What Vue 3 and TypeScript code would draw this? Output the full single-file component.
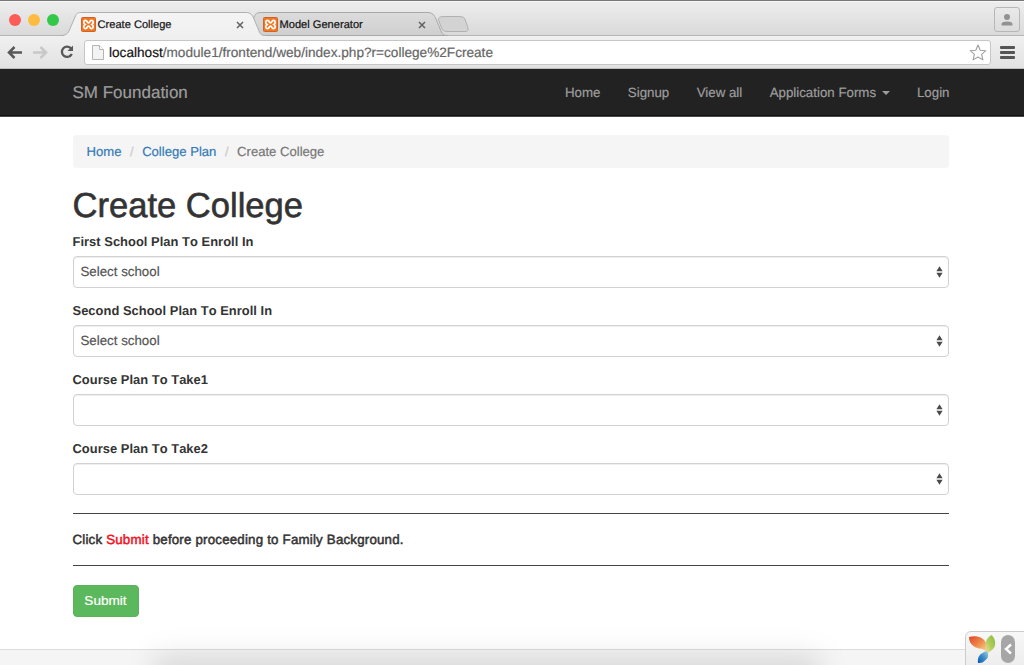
<script setup lang="ts">
interface Field { label: string; value: string }
const tabs = [
  { title: 'Create College', active: true },
  { title: 'Model Generator', active: false },
]
const links = ['Home', 'Signup', 'View all', 'Application Forms', 'Login']
const fields: Field[] = [
  { label: 'First School Plan To Enroll In', value: 'Select school' },
  { label: 'Second School Plan To Enroll In', value: 'Select school' },
  { label: 'Course Plan To Take1', value: '' },
  { label: 'Course Plan To Take2', value: '' },
]
</script>

<template>
  <div class="window">
    <header class="chrome">
      <div class="strip">
        <svg class="shapes" width="1024" height="35" viewBox="0 0 1024 35">
          <defs>
            <linearGradient id="active" x1="0" y1="0" x2="0" y2="1"><stop offset="0" stop-color="#f4f4f4" /><stop offset="1" stop-color="#efefef" /></linearGradient>
            <linearGradient id="idle" x1="0" y1="0" x2="0" y2="1"><stop offset="0" stop-color="#dcdcdc" /><stop offset="1" stop-color="#cfcfcf" /></linearGradient>
          </defs>
          <path d="M0 33.5H1024" stroke="#b5b5b5" />
          <path d="M248 33.5C258 33 258 27 253.5 17C255 11 257 10.500 263 10.500H427C433 10.500 434 13 436 17L441 29C442 32 443 33.500 448 33.500Z" fill="url(#idle)" stroke="#a9a9a9" />
          <path d="M444 14.5H460Q464 14.5 465 17L468 26Q469 29.500 465 29.500H447Q443 29.500 442 27L438.500 18Q437.500 14.500 444 14.500Z" fill="#d3d3d3" stroke="#b1b1b1" />
          <path d="M62 34C67 33 68 31 69 29L75 15C76.500 11 78 10.500 82 10.500H246C251 10.500 252 13 254 17L259 29C260 32 261 33 266 34V35H62Z" fill="url(#active)" />
          <path d="M61 33.500C66 33.500 68 31 69 29L75 15C76.500 11 78 10.500 82 10.500H246C251 10.500 252 13 254 17L259 29C260 32 261 33.500 266 33.500" fill="none" stroke="#b0b0b0" />
        </svg>
        <div class="lights"><i class="red" /><i class="yellow" /><i class="green" /></div>
        <div v-for="t in tabs" :key="t.title" class="tab" :class="{ active: t.active }">
          <svg width="15" height="15" viewBox="0 0 15 15">
            <rect x=".5" y=".5" width="14" height="14" rx="1" fill="#f37623" stroke="#cf6428" />
            <path d="M4.700 3.400C2.200 3.400 2.200 6.300 4.100 7.500C2.200 8.700 2.200 11.600 4.700 11.600C6.600 11.600 5.600 9.200 7.500 9.200S8.400 11.600 10.300 11.600C12.800 11.600 12.800 8.700 10.900 7.500C12.800 6.300 12.800 3.400 10.300 3.400C8.400 3.400 9.400 5.800 7.500 5.800S6.600 3.400 4.700 3.400Z" fill="none" stroke="#fff" stroke-width="1.700" />
          </svg>
          <span>{{ t.title }}</span>
          <svg class="close" width="8" height="8" viewBox="0 0 8 8"><path d="M1 1L7 7M7 1L1 7" stroke="#616161" stroke-width="1.500" /></svg>
        </div>
        <div class="profile">
          <svg width="14" height="14" viewBox="0 0 14 14" fill="#929292"><circle cx="7" cy="4" r="3" /><path d="M1.500 12.500V11Q1.500 8.500 7 8.500T12.500 11V12.500Z" /></svg>
        </div>
      </div>
      <div class="toolbar">
        <svg class="arrow" width="15" height="13" viewBox="0 0 15 13"><path d="M15 6.500H2M7.500 1L2 6.500L7.500 12" fill="none" stroke="#585858" stroke-width="2.500" /></svg>
        <svg class="arrow forward" width="15" height="13" viewBox="0 0 15 13"><path d="M0 6.500H13M7.500 1L13 6.500L7.500 12" fill="none" stroke="#c8c8c8" stroke-width="2.500" /></svg>
        <svg class="reload" width="14" height="14" viewBox="0 0 14 14"><path d="M11.200 3.500A5.200 5.200 0 1 0 11.800 9" fill="none" stroke="#585858" stroke-width="2.300" /><path d="M13 0.500V6H7.500Z" fill="#585858" /></svg>
        <div class="address">
          <svg width="12" height="15" viewBox="0 0 12 15"><path d="M.5 .5H7.500L11.500 4.500V14.500H.5Z" fill="#f3f3f3" stroke="#b4b4b4" /><path d="M7.500 .5V4.500H11.500" fill="#fff" stroke="#b4b4b4" /></svg>
          <span class="url"><b>localhost</b>/module1/frontend/web/index.php?r=college%2Fcreate</span>
          <svg class="star" width="18" height="17" viewBox="0 0 18 17"><path d="M9 1L11.200 6.200L16.800 6.700L12.600 10.400L13.900 15.900L9 13L4.100 15.900L5.400 10.400L1.200 6.700L6.800 6.200Z" fill="#fff" stroke="#a0a0a0" stroke-width="1.100" stroke-linejoin="round" /></svg>
        </div>
        <div class="menu"><i /><i /><i /></div>
      </div>
    </header>
    <nav class="navbar">
      <span class="brand">SM Foundation</span>
      <div class="links">
        <a v-for="link in links" :key="link">{{ link }}<i v-if="link === 'Application Forms'" class="caret" /></a>
      </div>
    </nav>
    <main>
      <div class="breadcrumb"><a>Home</a><i>/</i><a>College Plan</a><i>/</i><span>Create College</span></div>
      <h1>Create College</h1>
      <div v-for="f in fields" :key="f.label" class="field">
        <label>{{ f.label }}</label>
        <div class="select">
          <span>{{ f.value }}</span>
          <svg width="7" height="12" viewBox="0 0 7 12" fill="#4b4b4b"><path d="M3.500 .3L6.600 5.200H.4ZM.4 6.800H6.600L3.500 11.700Z" /></svg>
        </div>
      </div>
      <p class="notice"><span>Click <em>Submit</em> before proceeding to Family Background.</span></p>
      <button type="button">Submit</button>
    </main>
    <footer />
    <div class="shade" />
    <div class="debug">
      <svg width="27" height="29" viewBox="0 0 27 29">
        <defs>
          <linearGradient id="leafRed" x1="0" y1="0" x2="1" y2="1"><stop offset="0" stop-color="#de4428" /><stop offset=".5" stop-color="#ee8a4c" /><stop offset="1" stop-color="#f8dc97" /></linearGradient>
          <linearGradient id="leafGreen" x1="1" y1="0" x2="0" y2="1"><stop offset="0" stop-color="#87b93d" /><stop offset=".6" stop-color="#b7cf60" /><stop offset="1" stop-color="#f0e69a" /></linearGradient>
          <linearGradient id="leafBlue" x1="1" y1="0" x2="0" y2="1"><stop offset="0" stop-color="#9fd0e6" /><stop offset=".5" stop-color="#3d8cc8" /><stop offset="1" stop-color="#075aab" /></linearGradient>
        </defs>
        <path d="M0 2C8 0 15 3 17 8C18 11 18 14 18 17C15 14 13 14 10 13.500C4 12 0 8 0 2Z" fill="url(#leafRed)" />
        <path d="M22.500 0C27 4 27.500 11 23.500 14.500Q21 17 18.500 18C15.500 11 15.500 4 22.500 0Z" fill="url(#leafGreen)" />
        <path d="M18 16C20 20 19.500 23 16 25.500Q13.500 28.500 9 28C8 22 11 18 18 16Z" fill="url(#leafBlue)" />
      </svg>
      <div class="toggle"><svg width="8" height="12" viewBox="0 0 8 12"><path d="M7 1.500L2 6L7 10.500" fill="none" stroke="#fff" stroke-width="2.400" /></svg></div>
    </div>
  </div>
</template>

<style>
body { margin: 0; overflow: hidden; }
</style>

<style scoped>
* { box-sizing: border-box; }
svg { display: block; flex: none; }
.window { position: relative; width: 1024px; height: 665px; overflow: hidden; background: #fff; font: 13.1px "Liberation Sans", Arial, sans-serif; color: #333; text-rendering: geometricPrecision; -webkit-text-stroke: .2px; }
.chrome { height: 69px; border-top: 1px solid #777; background: #efefef; }
.strip { position: relative; height: 35px; display: flex; align-items: flex-start; background: linear-gradient(#ededed, #d9d9d9); border-top: 1px solid #f7f7f7; }
.shapes { position: absolute; left: 0; top: 0; }
.lights { display: flex; gap: 7px; margin: 11.5px 0 0 9px; width: 72px; position: relative; }
.lights i { width: 12px; height: 12px; border-radius: 50%; }
.red { background: #fc5b57; } .yellow { background: #fdbc40; } .green { background: #34c84a; }
.tab { position: relative; display: flex; align-items: center; height: 15px; width: 182px; margin-top: 15px; font-size: 11.1px; color: #111; }
.tab span { margin-left: 1.500px; }
.close { margin-left: auto; margin-right: 19px; }
.profile { position: relative; margin: 5px 4px 0 auto; width: 26px; height: 25px; border: 1px solid #b7b7b7; border-radius: 3px; display: flex; align-items: center; justify-content: center; }
.toolbar { height: 33px; display: flex; align-items: center; padding-left: 7px; background: linear-gradient(#f0f0f0, #e2e2e2); border-bottom: 1px solid #bcbcbc; }
.forward { margin-left: 11px; }
.reload { margin-left: 12px; }
.address { width: 907px; height: 25px; margin-left: 10px; padding: 0 3px 0 7px; display: flex; align-items: center; border: 1px solid #c6c6c6; border-radius: 3px; background: #fff; }
.url { margin-left: 5px; font-size: 13.62px; color: #666; white-space: nowrap; }
.url b { font-weight: 400; color: #111; }
.star { margin-left: auto; }
.menu { display: grid; gap: 2px; margin-left: 9px; }
.menu i { width: 15px; height: 3px; border-radius: 1px; background: #555; }
.navbar { height: 48px; display: flex; align-items: center; justify-content: space-between; padding: 0 74.5px 0 72.5px; background: #222; border-bottom: 1px solid #4a4a4a; box-shadow: inset 0 -1px #101010; color: #9d9d9d; }
.brand { font-size: 17px; }
.links { display: flex; gap: 27.400px; font-size: 13.3px; }
.caret { display: inline-block; margin-left: 5.500px; border: 4px solid transparent; border-top-color: #9d9d9d; border-bottom: 0; vertical-align: 2px; }
main { padding: 17.500px 75px 0 72.5px; }
.breadcrumb { height: 33.5px; display: flex; align-items: center; padding-left: 14px; border-radius: 4px; background: #f5f5f5; color: #777; }
.breadcrumb a { color: #337ab7; }
.breadcrumb i { width: 20.700px; text-align: center; font-style: normal; color: #ccc; }
h1 { margin: 18px 0 7px; height: 40px; line-height: 40px; font-size: 34.55px; font-weight: 400; -webkit-text-stroke: .6px #333; }
.field { height: 69px; }
label { display: block; height: 22.500px; line-height: 17px; font-size: 12.9px; letter-spacing: .04px; font-weight: 700; font-kerning: none; white-space: nowrap; -webkit-text-stroke: 0; }
.select { height: 32px; display: flex; align-items: center; justify-content: space-between; padding: 0 5px 0 7px; border: 1.5px solid #d2d2d2; border-radius: 4px; font-size: 13.3px; color: #555; box-shadow: inset 0 1px 1px #00000012; }
.notice { height: 53px; margin: 4px 0 0; display: flex; align-items: center; border: solid #444; border-width: 1px 0; font-size: 13.3px; letter-spacing: .2px; -webkit-text-stroke: .5px; }
.notice em { color: #f5101f; font-style: normal; }
button { display: block; width: 66px; height: 31.500px; margin-top: 19px; padding: 0; border: 1px solid #5ab35a; border-radius: 4px; background: #5cb85c; color: #fff; font: 13.6px "Liberation Sans", Arial, sans-serif; -webkit-text-stroke: .2px; }
footer { position: absolute; left: 0; right: 0; bottom: 0; height: 16px; border-top: 1px solid #ddd; background: #f5f5f5; }
.shade { position: absolute; left: 153px; right: 203px; bottom: -40px; height: 50px; border-radius: 10px; background: #0000001c; filter: blur(14px); }
.debug { position: absolute; left: 965px; bottom: -4px; width: 64px; height: 38px; display: flex; padding: 3px 0 0 3px; border: 1.5px solid #ccc; border-radius: 6px 0 0 0; background: linear-gradient(#f7f7f7, #ececec); }
.toggle { width: 14px; height: 28px; margin-left: 5px; border-radius: 7px; display: flex; align-items: center; justify-content: center; background: #a6a6a6; }
</style>
